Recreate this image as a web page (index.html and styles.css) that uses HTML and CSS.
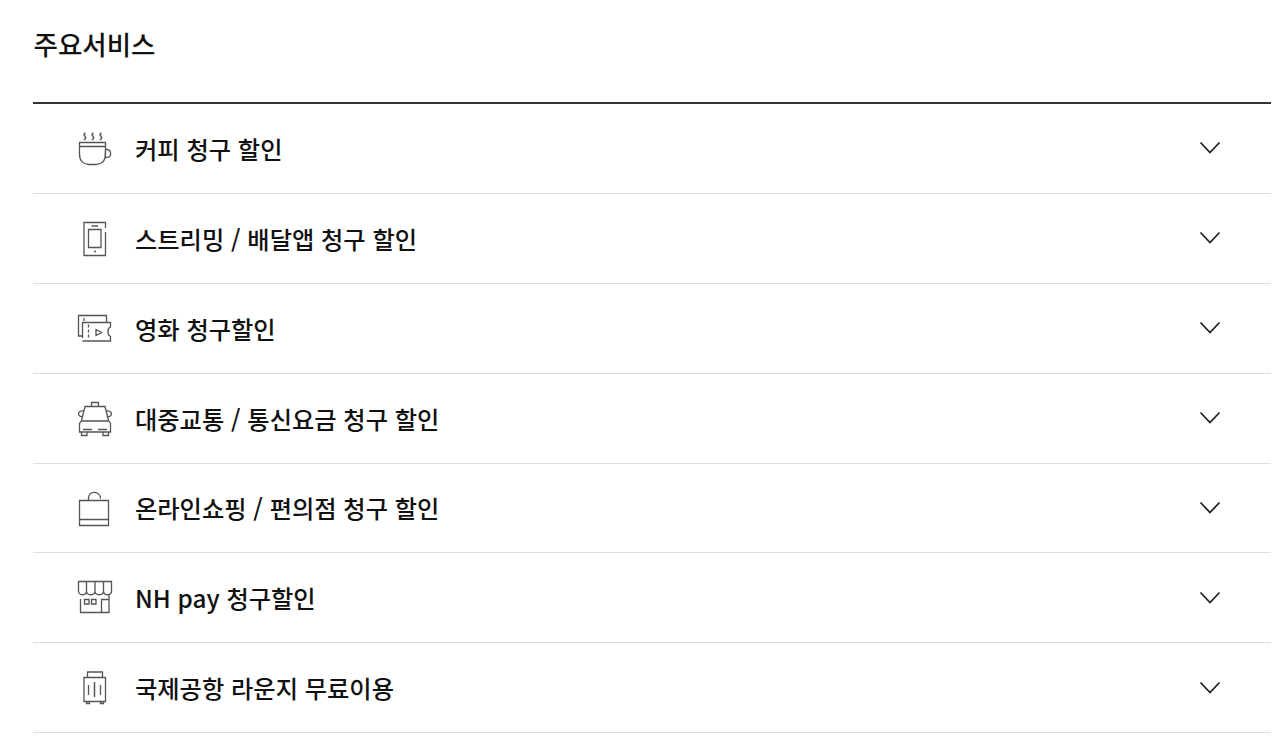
FILE: index.html
```html
<!DOCTYPE html>
<html lang="ko">
<head>
  <meta charset="UTF-8" />
  <meta name="viewport" content="width=device-width, initial-scale=1.0"/>
  <title>주요서비스</title>
  <link rel="stylesheet" href="styles.css">
</head>
<body>

  <section class="services">
    <h2>주요서비스</h2>

    <ul class="service-list">
      <!-- Coffee -->
      <li class="service">
        <svg class="icon" viewBox="5 5 40 40">
          <path d="M9.5 18.5h26v4h-26zM9.5 22v8c0 7 4 10.5 9.5 10.5h7c5.500 0 9.500-3.500 9.500-10.500V22M35.500 25.500h1c5.500 0 5.500 8 0 8H35z"/>
          <path d="M15.500 9c-4 1.500 1.500 3.500 0 5.500l-1.500 1.500M23.500 9c-4 1.500 1.500 3.500 0 5.500L22 16M31.500 9c-4 1.500 1.500 3.500 0 5.500L30 16" stroke-width="1.500"/>
        </svg>
        <span class="name">커피 청구 할인</span>
        <svg class="arrow" viewBox="0 0 22 14"><path d="M1.500 1.500l9.500 10 9.500-10"/></svg>
      </li>

      <!-- Phone -->
      <li class="service">
        <svg class="icon" viewBox="5 4 40 40">
          <path d="M35.500 14V8.500h-21.500v33h21.500V18M18.500 15.500h12.500v18h-12.500z"/>
          <path d="M21.500 12h6.500M24 37.500h2" stroke-width="1.600"/>
        </svg>
        <span class="name">스트리밍 / 배달앱 청구 할인</span>
        <svg class="arrow" viewBox="0 0 22 14"><path d="M1.500 1.500l9.500 10 9.500-10"/></svg>
      </li>

      <!-- Movie ticket -->
      <li class="service">
        <svg class="icon" viewBox="5 4 40 40">
          <path d="M36.500 18.500v-7h-28v20.500h3.500M12.500 34V18.500h28v4.500c-3.500 1.500-3.500 8 0 9.500v4.500h-28M26 25.500v6l5.500-3z"/>
          <path d="M18.500 20.500v15M14 14v3" stroke-dasharray="3 2"/>
        </svg>
        <span class="name">영화 청구할인</span>
        <svg class="arrow" viewBox="0 0 22 14"><path d="M1.500 1.500l9.500 10 9.500-10"/></svg>
      </li>

      <!-- Taxi -->
      <li class="service">
        <svg class="icon" viewBox="5 4 40 40">
          <path d="M21.500 12.500v-4h7v4M15 12.500h20l3.500 14 2 3v8.500h-31v-8.500l2-3zM11.500 27h27M14 17c-7-1-7 6-1.500 5.500M36 17c7-1 7 6 1.500 5.500M11.500 38v3.500h5.500V38M33 38v3.500h5.500V38"/>
          <path d="M13 35.500h9M28 35.500h9" stroke-width="1.400"/>
        </svg>
        <span class="name">대중교통 / 통신요금 청구 할인</span>
        <svg class="arrow" viewBox="0 0 22 14"><path d="M1.500 1.500l9.500 10 9.500-10"/></svg>
      </li>

      <!-- Shopping bag -->
      <li class="service">
        <svg class="icon" viewBox="5 4 40 40">
          <path d="M9.500 16.500h29v25h-29zM9.500 35.500h29M18.500 16v-2c0-7.500 11.500-7.500 12 .500"/>
        </svg>
        <span class="name">온라인쇼핑 / 편의점 청구 할인</span>
        <svg class="arrow" viewBox="0 0 22 14"><path d="M1.500 1.500l9.500 10 9.500-10"/></svg>
      </li>

      <!-- Store -->
      <li class="service">
        <svg class="icon" viewBox="5 6 40 40">
          <path d="M8.500 9.500h33v9.500c0 5-8 5-8 0 0 5-8.500 5-8.500 0 0 5-8.500 5-8.500 0 0 5-8 5-8 0zM16.500 9.500v10M25 9.500v10M33.500 9.500v10"/>
          <path d="M10.500 27v13.500h28.500V23M31.500 40V27.500H39M14.500 27.500h4.500v4.500h-4.500zM21.500 27.500H26v4.500h-4.500z"/>
        </svg>
        <span class="name">NH pay 청구할인</span>
        <svg class="arrow" viewBox="0 0 22 14"><path d="M1.500 1.500l9.500 10 9.500-10"/></svg>
      </li>

      <!-- Suitcase -->
      <li class="service">
        <svg class="icon" viewBox="5 6 40 40">
          <path d="M14 15.500h21.500v24h-21.500zM17.500 15v-5M32.500 15v-5M18.500 23v10M30.500 23v10M16.500 40v1.500h3V40M30.500 40v1.500h3V40"/>
          <path d="M17 10h16M24.500 20v15" stroke-width="1.500"/>
        </svg>
        <span class="name">국제공항 라운지 무료이용</span>
        <svg class="arrow" viewBox="0 0 22 14"><path d="M1.500 1.500l9.500 10 9.500-10"/></svg>
      </li>
    </ul>
  </section>

</body>
</html>
```

FILE: styles.css
```css
body { font-family: "Noto Sans CJK KR", sans-serif; margin: 0; padding: 0; background: #fff; color: #111; overflow: hidden; }
.services { padding: 25px 7px 0 33px; }
h2 { margin: 0; height: 77.2px; padding-left: 0.5px; font-size: 26.5px; font-weight: 500; line-height: 38px; }

/* Service list */
.service-list { list-style: none; margin: 0; padding: 0; border-top: 2px solid #333; }
.service { display: flex; align-items: center; height: 89.85px; box-sizing: border-box; padding: 0 50px 0 42px; border-bottom: 1px solid #ddd; }
.name { flex: 1; margin: 0 0 -0.8px 20px; font-size: 24.25px; font-weight: 500; line-height: 36px; }

/* Icons */
.icon { width: 40px; height: 40px; fill: none; stroke: #555; stroke-width: 1.3; }
.arrow { width: 22px; height: 14px; margin-bottom: 0.28px; fill: none; stroke: #222; stroke-width: 1.8; }
```
